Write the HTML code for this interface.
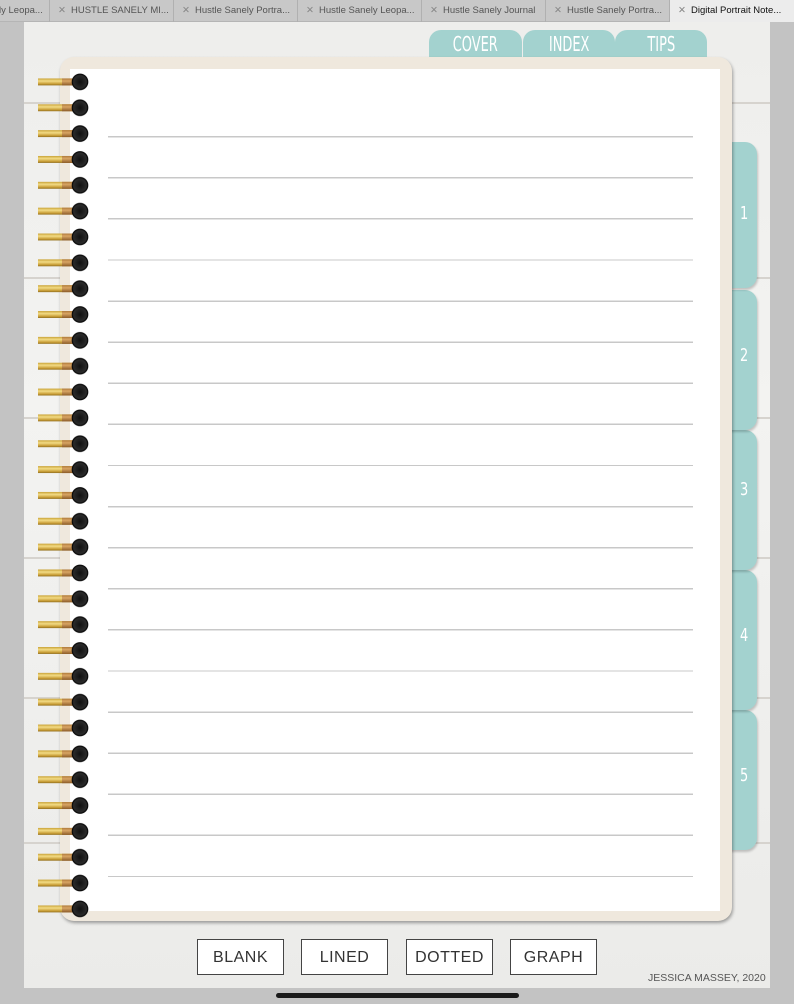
<!DOCTYPE html>
<html><head><style>
*{margin:0;padding:0;box-sizing:border-box}
body{width:794px;height:1004px;background:#c3c3c3;position:relative;overflow:hidden;font-family:"Liberation Sans",sans-serif}
.tabs{position:absolute;top:0;left:0;width:794px;height:22px;background:#c8c8c8;border-bottom:1px solid #b5b5b5}
.tab{position:absolute;top:0;height:22px;font-size:9.5px;color:#555;line-height:22px;border-left:1px solid #b0b0b0;padding-left:8px;white-space:nowrap;overflow:hidden}
.tab .x{color:#888;margin-right:5px}
.page{position:absolute;left:24px;top:22px;width:746px;height:966px;background:linear-gradient(180deg,#eeeeec,#f3f3f1 40%,#ebebe9);}
.plank{position:absolute;left:0;width:746px;height:2px;background:#d6d3ce}
.tt{position:absolute;top:30px;height:30px;background:#a3d2cf;border-radius:12px 12px 0 0;color:#fff;text-align:center;line-height:28px}
.tt span{display:inline-block;font-size:20px;transform:scaleX(.72);font-family:"DejaVu Sans Condensed","Liberation Sans Narrow",sans-serif}
.rt{position:absolute;left:725px;width:32px;background:#a3d2cf;border-radius:0 12px 12px 0;color:#fff;font-size:18px;box-shadow:1px 2px 2px rgba(0,0,0,.2);font-family:"DejaVu Sans Condensed",sans-serif}
.rt span{position:absolute;left:14px;transform:scaleX(.8)}
.cream{position:absolute;left:60px;top:57px;width:672px;height:864px;background:#efe8dd;border-radius:14px;box-shadow:1px 2px 3px rgba(0,0,0,.35)}
.white{position:absolute;left:70px;top:69px;width:650px;height:842px;background:#fff}
.lines{position:absolute;left:108px;top:136px;width:585px;height:745px;background:repeating-linear-gradient(180deg,#c8c8c8 0,#c8c8c8 1.4px,transparent 1.4px,transparent 41.1px)}
.bars{position:absolute;left:38px;top:69px;width:36px;height:853px;background:linear-gradient(180deg,transparent 0,transparent 9.5px,#c9a338 9.5px,#f3dc86 12px,#c69a32 15px,#8a6a1f 16.5px,transparent 16.5px) 0 0/36px 25.85px repeat-y}
.rings{position:absolute;left:70px;top:69px;width:20px;height:853px;background:radial-gradient(circle at 10px 12.9px,#111 0,#2a2a2a 6.5px,#000 8px,transparent 8.6px) 0 0/20px 25.85px repeat-y}
.rings2{position:absolute;left:62px;top:69px;width:14px;height:853px;background:linear-gradient(180deg,transparent 9.5px,#b07a3a 9.5px,#d9a564 12px,#8b5a26 16.5px,transparent 16.5px) 0 0/14px 25.85px repeat-y}
.btn{position:absolute;top:939px;width:87px;height:36px;border:1.3px solid #444;background:#fff;font-size:16px;color:#333;text-align:center;line-height:36px;letter-spacing:.5px}
.sig{position:absolute;left:648px;top:972px;font-size:10.5px;color:#555}
.home{position:absolute;left:276px;top:993px;width:243px;height:5px;border-radius:3px;background:#1a1a1a}
</style></head><body>
<div class="tabs">
<div class="tab" style="left:-1px;width:50px;padding-left:0;border:none">ly Leopa...</div>
<div class="tab" style="left:49px;width:124px"><span class="x">✕</span>HUSTLE SANELY MI...</div>
<div class="tab" style="left:173px;width:124px"><span class="x">✕</span>Hustle Sanely Portra...</div>
<div class="tab" style="left:297px;width:124px"><span class="x">✕</span>Hustle Sanely Leopa...</div>
<div class="tab" style="left:421px;width:124px"><span class="x">✕</span>Hustle Sanely Journal</div>
<div class="tab" style="left:545px;width:124px"><span class="x">✕</span>Hustle Sanely Portra...</div>
<div class="tab" style="left:669px;width:125px;background:#ececec;color:#111"><span class="x">✕</span>Digital Portrait Note...</div>
</div>
<div class="page">
<div class="plank" style="top:80px"></div>
<div class="plank" style="top:255px"></div>
<div class="plank" style="top:395px"></div>
<div class="plank" style="top:535px"></div>
<div class="plank" style="top:675px"></div>
<div class="plank" style="top:820px"></div>
</div>
<div class="tt" style="left:429px;width:93px"><span>COVER</span></div>
<div class="tt" style="left:523px;width:92px"><span>INDEX</span></div>
<div class="tt" style="left:615px;width:92px"><span>TIPS</span></div>
<div class="rt" style="top:710px;height:140px"><span style="top:55px">5</span></div>
<div class="rt" style="top:570px;height:140px"><span style="top:55px">4</span></div>
<div class="rt" style="top:430px;height:140px"><span style="top:49px">3</span></div>
<div class="rt" style="top:290px;height:140px"><span style="top:55px">2</span></div>
<div class="rt" style="top:142px;height:146px"><span style="top:61px">1</span></div>
<div class="cream"></div>
<div class="white"></div>
<div class="lines"></div>
<div class="bars"></div>
<div class="rings2"></div>
<div class="rings"></div>
<div class="btn" style="left:197px">BLANK</div>
<div class="btn" style="left:301px">LINED</div>
<div class="btn" style="left:406px">DOTTED</div>
<div class="btn" style="left:510px">GRAPH</div>
<div class="sig">JESSICA MASSEY, 2020</div>
<div class="home"></div>
</body></html>
